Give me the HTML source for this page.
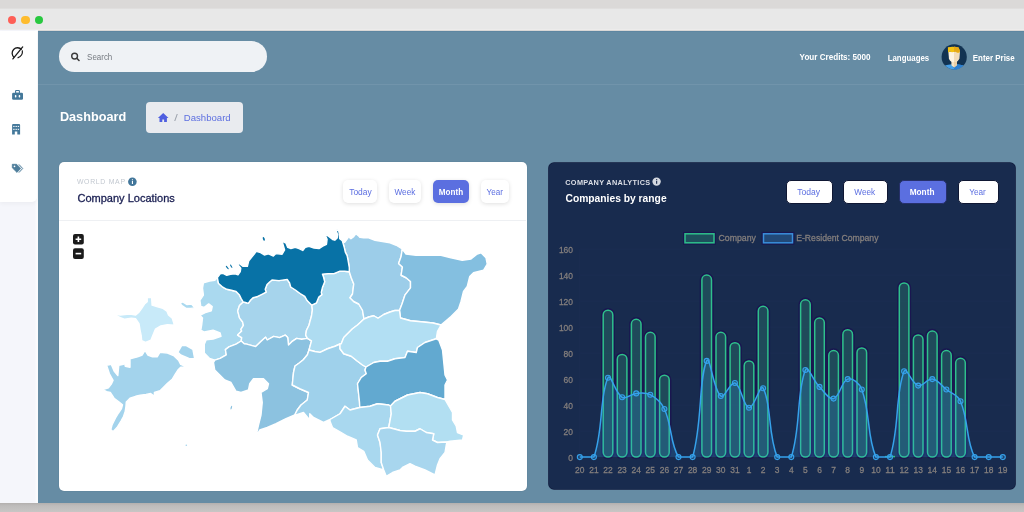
<!DOCTYPE html>
<html><head><meta charset="utf-8">
<style>
*{box-sizing:border-box;margin:0;padding:0}
html,body{width:1024px;height:512px;overflow:hidden;background:#d9d7d6;font-family:"Liberation Sans",sans-serif}
.abs{position:absolute}
#topband{left:0;top:0;width:1024px;height:9px;background:#dbd9d8}
#bar{left:0;top:8.2px;width:1024px;height:22.3px;background:linear-gradient(#dcdad9,#e8e8e8 1.5px,#e8e8e8 20.8px,#f1efee)}
.dot{width:8.6px;height:8.6px;border-radius:50%;top:15.7px}
#side{left:0;top:30.5px;width:37px;height:171px;background:#fff;border-radius:0 0 5px 0;box-shadow:0 2px 4px rgba(0,0,0,.04)}
#sidebg{left:0;top:30px;width:38px;height:472.5px;background:linear-gradient(90deg,#f5f6fb 35px,#fafbfd 36px)}
#main{left:38px;top:30.5px;width:986px;height:472px;background:linear-gradient(#5a83a0,#668ca4 1.5px)}
#bottom{left:0;top:502.5px;width:1024px;height:9.5px;background:linear-gradient(#b3b0ae,#bebcbb 30%,#c8c6c5)}
#hline{left:38px;top:84px;width:986px;height:1px;background:#7194ab}
#search{left:59px;top:41px;width:208px;height:31px;border-radius:16px;background:#eff2f5}
#crumb{left:146px;top:102px;width:97px;height:31px;border-radius:4px;background:#e9ebef}
.card{border-radius:5px}
#c1{left:59px;top:162px;width:468px;height:328.7px;background:#fff;box-shadow:0 0 1px rgba(20,40,60,.35)}
#c2{left:548.5px;top:162.7px;width:466px;height:326.8px;background:#182b4e;box-shadow:0 0 0 0.8px #101a3c}
.btn{position:absolute;border-radius:5px}
#c1 .btn{top:18px;height:23px;background:#fff;box-shadow:0 1px 4px rgba(0,0,0,.13)}
#c1 .btn.on{background:#5b6fe0}
#c2 .btn{top:17px;height:24.5px;background:#fff;border:1px solid #0f1733}
#c2 .btn.on{background:#5b6fe0;border-color:#26306a}
</style></head><body>
<div class="abs" id="topband"></div>
<div class="abs" id="bar"></div>
<div class="abs dot" style="left:7.7px;background:#fe5f57"></div>
<div class="abs dot" style="left:21.2px;background:#febc2e"></div>
<div class="abs dot" style="left:34.7px;background:#28c840"></div>
<div class="abs" id="sidebg"></div>
<div class="abs" id="side"></div>
<div class="abs" id="main"></div>
<div class="abs" id="bottom"></div>
<div class="abs" id="hline"></div>
<div class="abs" id="search"></div>
<div class="abs" id="crumb"></div>
<div class="abs card" id="c1">
  <div class="btn" style="left:284px;width:34.3px"></div>
  <div class="btn" style="left:330px;width:32px"></div>
  <div class="btn on" style="left:374px;width:35.7px"></div>
  <div class="btn" style="left:422px;width:28px"></div>
  <div class="abs" style="left:0;top:58px;width:467px;height:1px;background:#eef0f3"></div>
  <svg class="abs" style="left:0;top:0" width="467" height="328" viewBox="0 0 467 328"><path d="M55.90,152.40 L61.40,153.00 L68.00,152.40 L72.30,152.40 L76.70,153.00 L80.00,150.20 L82.70,146.40 L85.50,142.00 L88.20,139.80 L88.20,135.50 L92.60,135.50 L93.10,143.10 L98.60,144.80 L104.00,146.40 L107.90,149.10 L109.50,153.00 L113.30,156.20 L115.00,161.70 L115.50,163.30 L108.40,162.80 L101.90,163.90 L96.40,167.20 L94.20,172.60 L92.00,178.10 L86.50,180.30 L82.70,178.70 L82.20,173.70 L81.10,168.30 L80.00,161.70 L76.70,156.80 L72.30,156.20 L65.80,157.30 L61.40,155.70 L58.10,154.00Z" fill="#c8eaf9" stroke="#fff" stroke-width="1.4" stroke-linejoin="round"/><path d="M121.00,141.50 L123.70,139.80 L128.10,142.60 L132.50,142.00 L135.80,145.90 L131.40,146.40 L127.00,146.40 L123.70,144.20Z" fill="#aad9ef" stroke="#fff" stroke-width="1.4" stroke-linejoin="round"/><path d="M47.60,203.30 L52.30,202.40 L55.10,209.00 L58.80,213.60 L59.80,203.30 L64.50,202.40 L65.40,199.60 L66.30,204.30 L71.00,205.20 L71.00,196.80 L78.50,194.90 L83.20,193.00 L86.00,188.30 L88.80,193.00 L93.50,194.90 L98.20,194.90 L101.00,190.20 L108.50,191.10 L115.10,193.90 L119.80,198.60 L121.70,202.40 L128.20,205.20 L121.70,205.20 L118.90,208.00 L116.00,212.70 L113.20,217.40 L108.50,221.20 L104.80,224.90 L101.00,228.70 L95.40,230.50 L95.40,234.30 L91.70,231.50 L87.00,232.40 L81.30,233.30 L76.60,234.30 L71.00,236.20 L67.30,239.90 L67.00,244.00 L66.20,249.50 L64.50,254.50 L62.00,259.00 L58.00,265.50 L54.00,269.80 L51.80,267.50 L53.00,263.00 L56.50,256.00 L59.50,251.00 L62.50,246.50 L63.50,242.70 L59.80,239.90 L55.10,236.20 L51.30,230.50 L47.60,229.60 L43.80,227.70 L49.40,225.80 L52.30,222.10 L54.10,218.30 L50.40,211.80Z" fill="#a3d3ec" stroke="#fff" stroke-width="1.4" stroke-linejoin="round"/><path d="M118.90,190.20 L122.60,183.60 L127.30,183.60 L133.90,187.40 L135.70,196.80 L131.00,196.80 L126.40,194.90 L121.70,193.00Z" fill="#a3d3ec" stroke="#fff" stroke-width="1.4" stroke-linejoin="round"/><path d="M158.40,115.50 L159.40,121.20 L163.80,125.20 L167.75,127.30 L172.40,128.25 L177.10,129.50 L180.50,133.10 L182.20,136.60 L184.30,140.00 L180.50,143.60 L178.70,148.90 L180.50,155.90 L183.60,160.00 L184.40,163.30 L181.90,167.40 L182.70,169.00 L178.60,173.10 L182.70,175.60 L182.20,179.00 L177.00,182.10 L169.90,184.90 L166.40,187.60 L167.30,192.80 L161.10,196.40 L155.80,198.10 L150.60,196.40 L145.30,191.10 L145.30,182.30 L147.10,177.90 L154.10,177.00 L162.00,174.40 L161.10,170.90 L154.10,168.20 L145.30,170.00 L141.80,168.20 L142.70,163.00 L143.50,156.00 L140.90,153.30 L146.20,150.70 L152.30,148.90 L153.20,144.50 L149.70,141.90 L145.30,145.40 L141.80,144.50 L140.90,138.40 L144.40,133.10 L143.50,126.10 L144.40,120.80 L150.60,119.00 L155.80,118.20 L158.40,115.50Z" fill="#aad9ef" stroke="#fff" stroke-width="1.4" stroke-linejoin="round"/><path d="M184.30,140.00 L186.50,140.50 L189.30,141.40 L191.20,138.60 L194.00,135.75 L197.75,134.80 L203.40,132.00 L207.10,130.10 L206.20,127.30 L208.00,122.60 L210.90,119.80 L213.00,118.00 L220.00,118.60 L228.20,117.40 L230.60,121.00 L231.70,125.00 L236.40,128.00 L241.10,131.50 L245.80,134.40 L248.10,138.50 L252.80,143.20 L253.40,147.90 L252.50,154.00 L250.80,160.00 L250.00,163.30 L247.50,168.20 L246.70,173.10 L248.40,176.40 L242.60,177.20 L237.70,176.40 L232.80,179.70 L229.50,183.00 L228.70,175.60 L226.20,173.10 L220.50,175.60 L214.70,174.40 L208.20,178.00 L206.50,175.20 L201.60,179.70 L196.70,184.60 L187.70,182.10 L185.20,181.70 L182.20,179.00 L182.70,175.60 L178.60,173.10 L182.70,169.00 L181.90,167.40 L184.40,163.30 L183.60,160.00 L180.50,155.90 L178.70,148.90 L180.50,143.60 L184.30,140.00Z" fill="#a6d4ec" stroke="#fff" stroke-width="1.4" stroke-linejoin="round"/><path d="M155.80,198.10 L161.10,196.40 L167.30,192.80 L166.40,187.60 L169.90,184.90 L177.00,182.10 L182.20,179.00 L185.20,181.70 L187.70,182.10 L196.70,184.60 L201.60,179.70 L206.50,175.20 L208.20,178.00 L214.70,174.40 L220.50,175.60 L226.20,173.10 L228.70,175.60 L229.50,183.00 L232.80,179.70 L237.70,176.40 L242.60,177.20 L248.40,176.40 L252.50,178.90 L250.00,188.00 L248.40,192.80 L244.30,197.70 L240.20,201.00 L236.00,204.00 L234.50,210.50 L233.25,223.00 L240.75,226.75 L249.50,230.50 L248.25,238.00 L242.00,243.00 L238.25,248.00 L235.75,253.00 L227.00,256.75 L217.00,261.75 L208.25,265.50 L200.75,268.00 L197.00,274.25 L199.50,263.00 L202.00,253.00 L203.25,240.50 L202.00,230.50 L208.25,226.75 L209.50,221.75 L204.50,216.75 L194.50,216.75 L190.75,221.75 L189.50,228.00 L182.00,230.50 L177.00,229.25 L172.00,220.50 L165.75,218.00 L160.75,213.00 L155.75,208.00 L154.50,200.50 L155.80,198.10Z" fill="#8cc2e0" stroke="#fff" stroke-width="1.4" stroke-linejoin="round"/><path d="M252.80,143.20 L257.50,140.80 L259.80,135.00 L262.80,132.60 L262.20,130.30 L263.40,125.60 L265.70,119.80 L264.50,115.00 L263.40,112.10 L269.20,111.60 L275.00,111.60 L280.90,109.20 L285.60,109.20 L290.30,109.80 L292.25,115.75 L294.75,122.00 L293.50,132.00 L291.00,135.75 L294.75,139.50 L299.75,142.00 L303.50,148.25 L305.00,157.00 L298.50,163.00 L293.50,166.75 L288.50,171.75 L284.75,175.50 L282.25,181.75 L281.00,182.00 L276.00,184.25 L268.50,186.75 L261.00,190.35 L255.75,189.50 L250.00,188.00 L252.50,178.90 L248.40,176.40 L246.70,173.10 L247.50,168.20 L250.00,163.30 L250.80,160.00 L252.50,154.00 L253.40,147.90 L252.80,143.20Z" fill="#aedcf1" stroke="#fff" stroke-width="1.4" stroke-linejoin="round"/><path d="M250.00,188.00 L255.75,189.50 L261.00,190.35 L268.50,186.75 L276.00,184.25 L281.00,182.00 L281.00,186.75 L284.75,191.75 L292.25,194.25 L298.50,199.25 L303.50,203.00 L307.00,205.00 L306.00,208.00 L307.25,211.75 L302.25,215.50 L298.50,221.75 L299.75,233.00 L300.50,240.00 L300.75,245.50 L291.00,248.00 L286.00,244.25 L281.00,251.75 L271.00,257.50 L264.50,260.50 L254.50,255.50 L250.75,251.75 L250.75,258.00 L244.50,250.50 L237.00,253.00 L235.75,253.00 L238.25,248.00 L242.00,243.00 L248.25,238.00 L249.50,230.50 L240.75,226.75 L233.25,223.00 L234.50,210.50 L236.00,204.00 L240.20,201.00 L244.30,197.70 L248.40,192.80 L250.00,188.00Z" fill="#9fd1eb" stroke="#fff" stroke-width="1.4" stroke-linejoin="round"/><path d="M283.30,78.80 L285.60,80.30 L287.70,77.50 L288.80,76.00 L289.10,72.50 L289.80,75.00 L291.90,76.80 L294.70,74.60 L296.80,71.80 L299.70,74.00 L301.00,75.40 L304.60,75.70 L309.00,75.70 L316.00,78.25 L323.50,79.50 L331.00,80.75 L337.25,83.25 L343.30,87.00 L342.10,94.50 L339.60,101.40 L343.40,105.10 L342.10,113.25 L347.10,115.75 L351.50,119.50 L351.50,125.80 L345.90,133.20 L343.00,142.00 L340.50,148.50 L336.00,148.50 L331.00,150.00 L324.75,152.50 L319.00,156.25 L314.75,153.75 L309.75,155.00 L305.00,157.00 L303.50,148.25 L299.75,142.00 L294.75,139.50 L291.00,135.75 L293.50,132.00 L294.75,122.00 L292.25,115.75 L290.30,109.80 L290.30,105.70 L289.10,98.70 L288.10,93.60 L286.30,90.10 L285.20,85.20 L284.20,81.70 L283.30,78.80Z" fill="#9ccde9" stroke="#fff" stroke-width="1.4" stroke-linejoin="round"/><path d="M343.30,87.00 L347.00,92.00 L357.00,93.25 L369.50,93.25 L382.00,93.25 L392.00,95.75 L403.25,98.25 L412.00,97.00 L418.25,92.00 L422.00,90.75 L427.00,95.75 L428.25,102.00 L424.50,108.25 L414.50,110.75 L410.75,114.50 L408.25,124.50 L404.50,129.50 L402.00,139.50 L399.50,147.00 L392.00,154.50 L382.00,163.00 L374.00,161.00 L362.00,159.75 L351.50,158.75 L341.50,156.00 L340.50,148.50 L343.00,142.00 L345.90,133.20 L351.50,125.80 L351.50,119.50 L347.10,115.75 L342.10,113.25 L343.40,105.10 L339.60,101.40 L342.10,94.50 L343.30,87.00Z" fill="#84bfe0" stroke="#fff" stroke-width="1.4" stroke-linejoin="round"/><path d="M305.00,157.00 L309.75,155.00 L314.75,153.75 L319.00,156.25 L324.75,152.50 L331.00,150.00 L336.00,148.50 L340.50,148.50 L341.50,156.00 L351.50,158.75 L362.00,159.75 L374.00,161.00 L382.00,163.00 L378.50,169.25 L377.25,176.75 L366.00,180.50 L358.50,185.50 L357.25,190.50 L348.50,189.25 L346.00,195.50 L336.00,196.75 L328.50,199.25 L321.00,199.25 L314.75,200.50 L307.00,205.00 L303.50,203.00 L298.50,199.25 L292.25,194.25 L284.75,191.75 L281.00,186.75 L281.00,182.00 L282.25,181.75 L284.75,175.50 L288.50,171.75 L293.50,166.75 L298.50,163.00 L305.00,157.00Z" fill="#b2dff3" stroke="#fff" stroke-width="1.4" stroke-linejoin="round"/><path d="M307.00,205.00 L314.75,200.50 L321.00,199.25 L328.50,199.25 L336.00,196.75 L346.00,195.50 L348.50,189.25 L357.25,190.50 L358.50,185.50 L366.00,180.50 L377.25,176.75 L379.75,178.00 L383.50,188.00 L384.75,200.50 L386.00,213.00 L388.50,218.00 L386.00,223.00 L386.00,237.50 L378.50,235.50 L368.50,231.75 L361.00,230.50 L348.50,233.00 L336.00,239.25 L331.50,244.00 L329.75,243.00 L318.50,241.75 L311.00,244.25 L300.75,245.50 L300.50,240.00 L299.75,233.00 L298.50,221.75 L302.25,215.50 L307.25,211.75 L306.00,208.00 L307.00,205.00Z" fill="#62a9d0" stroke="#fff" stroke-width="1.4" stroke-linejoin="round"/><path d="M300.75,245.50 L311.00,244.25 L318.50,241.75 L329.75,243.00 L331.50,244.00 L332.25,251.75 L329.75,265.50 L321.00,266.75 L318.50,273.00 L321.00,280.50 L322.25,290.50 L322.25,300.50 L324.75,308.00 L316.00,305.50 L308.50,298.00 L304.75,289.25 L298.50,285.50 L297.25,278.00 L288.50,274.25 L282.25,270.50 L273.50,265.50 L271.00,259.25 L271.00,257.50 L281.00,251.75 L286.00,244.25 L291.00,248.00 L300.75,245.50Z" fill="#a9d8ef" stroke="#fff" stroke-width="1.4" stroke-linejoin="round"/><path d="M331.50,244.00 L336.00,239.25 L348.50,233.00 L361.00,230.50 L368.50,231.75 L378.50,235.50 L386.00,237.50 L393.50,250.50 L393.50,258.00 L397.25,264.25 L398.50,270.50 L404.75,273.00 L403.50,278.00 L391.00,279.25 L388.00,280.00 L378.50,280.50 L373.50,278.00 L374.75,271.75 L367.25,270.50 L361.00,266.75 L356.00,269.25 L347.25,269.25 L341.00,268.50 L329.75,265.50 L332.25,251.75 L331.50,244.00Z" fill="#b2dff2" stroke="#fff" stroke-width="1.4" stroke-linejoin="round"/><path d="M329.75,265.50 L341.00,268.50 L347.25,269.25 L356.00,269.25 L361.00,266.75 L367.25,270.50 L374.75,271.75 L373.50,278.00 L378.50,280.50 L388.00,280.00 L387.25,283.00 L386.00,290.50 L381.00,296.75 L378.50,303.00 L376.00,313.00 L366.00,308.00 L356.00,304.25 L351.00,301.75 L343.50,305.50 L341.00,308.00 L333.50,310.50 L327.25,314.25 L324.75,308.00 L322.25,300.50 L322.25,290.50 L321.00,280.50 L318.50,273.00 L321.00,266.75 L329.75,265.50Z" fill="#a8d6ee" stroke="#fff" stroke-width="1.4" stroke-linejoin="round"/><path d="M158.40,115.50 L161.20,111.80 L164.00,111.40 L167.75,113.25 L171.50,112.30 L176.20,111.80 L179.00,112.80 L181.30,109.50 L181.80,106.20 L179.90,103.90 L177.20,99.60 L180.50,101.80 L183.75,104.30 L188.40,104.30 L189.80,98.70 L195.90,91.20 L197.30,89.30 L201.60,90.70 L205.30,93.00 L209.40,91.90 L214.40,94.10 L216.90,91.60 L223.10,92.25 L225.60,87.90 L223.10,79.10 L226.90,81.00 L228.75,85.40 L231.90,86.60 L236.25,85.40 L240.00,86.60 L243.75,88.50 L246.25,85.40 L250.00,84.40 L255.00,86.00 L260.00,86.60 L263.75,84.10 L267.50,82.25 L268.10,77.25 L265.60,71.60 L265.20,69.70 L266.60,72.50 L270.10,74.60 L273.60,77.50 L275.80,78.20 L278.20,76.00 L278.60,72.50 L277.50,69.70 L277.90,67.60 L279.60,68.30 L280.30,71.80 L280.70,76.80 L283.30,78.80 L284.20,81.70 L285.20,85.20 L286.30,90.10 L288.10,93.60 L289.10,98.70 L290.30,105.70 L290.30,109.80 L285.60,109.20 L280.90,109.20 L275.00,111.60 L269.20,111.60 L263.40,112.10 L264.50,115.00 L265.70,119.80 L263.40,125.60 L262.20,130.30 L262.80,132.60 L259.80,135.00 L257.50,140.80 L252.80,143.20 L248.10,138.50 L245.80,134.40 L241.10,131.50 L236.40,128.00 L231.70,125.00 L230.60,121.00 L228.20,117.40 L220.00,118.60 L213.00,118.00 L210.90,119.80 L208.00,122.60 L206.20,127.30 L207.10,130.10 L203.40,132.00 L197.75,134.80 L194.00,135.75 L191.20,138.60 L189.30,141.40 L186.50,140.50 L184.30,140.00 L182.20,136.60 L180.50,133.10 L177.10,129.50 L172.40,128.25 L167.75,127.30 L163.80,125.20 L159.40,121.20 L158.40,115.50Z" fill="#0872a6" stroke="#fff" stroke-width="1.4" stroke-linejoin="round"/><ellipse transform="translate(204.80,76.90) rotate(-20)" rx="0.9" ry="2.0" fill="#0872a6"/><ellipse transform="translate(168.30,105.60) rotate(-40)" rx="0.6" ry="2.2" fill="#0872a6"/><ellipse transform="translate(172.20,104.20) rotate(-30)" rx="0.6" ry="2.0" fill="#0872a6"/><ellipse transform="translate(172.30,245.60) rotate(15)" rx="0.7" ry="1.9" fill="#8cc2e0"/><ellipse transform="translate(127.30,283.20) rotate(0)" rx="0.8" ry="0.7" fill="#a3d3ec"/><rect x="14" y="72" width="10.8" height="10.5" rx="2" fill="#1b1b1b"/><path d="M19.400000000000006,74.5v5.6M16.599999999999994,77.25h5.6" stroke="#fff" stroke-width="1.6"/><rect x="14" y="86.19999999999999" width="10.8" height="10.8" rx="2" fill="#1b1b1b"/><path d="M16.599999999999994,91.6h5.6" stroke="#fff" stroke-width="1.6"/></svg>
</div>
<div class="abs card" id="c2">
  <svg class="abs" style="left:0;top:0;will-change:transform" width="467" height="328" viewBox="0 0 467 328" font-family="Liberation Sans, sans-serif"><line x1="30.8" y1="294.10" x2="461.8" y2="294.10" stroke="#1c2e52" stroke-width="1"/><line x1="30.8" y1="268.10" x2="461.8" y2="268.10" stroke="#1c2e52" stroke-width="1"/><line x1="30.8" y1="242.10" x2="461.8" y2="242.10" stroke="#1c2e52" stroke-width="1"/><line x1="30.8" y1="216.10" x2="461.8" y2="216.10" stroke="#1c2e52" stroke-width="1"/><line x1="30.8" y1="190.10" x2="461.8" y2="190.10" stroke="#1c2e52" stroke-width="1"/><line x1="30.8" y1="164.10" x2="461.8" y2="164.10" stroke="#1c2e52" stroke-width="1"/><line x1="30.8" y1="138.10" x2="461.8" y2="138.10" stroke="#1c2e52" stroke-width="1"/><line x1="30.8" y1="112.10" x2="461.8" y2="112.10" stroke="#1c2e52" stroke-width="1"/><line x1="30.8" y1="86.10" x2="461.8" y2="86.10" stroke="#1c2e52" stroke-width="1"/><line x1="30.8" y1="86.1" x2="30.8" y2="294.1" stroke="#1c2e52" stroke-width="1"/><rect x="52.80" y="145.80" width="12.40" height="149.70" rx="6.20" fill="none" stroke="#1a1650" stroke-width="1.6"/><rect x="54.20" y="147.20" width="9.6" height="146.90" rx="4.8" fill="rgba(60,200,140,0.2)" stroke="#2fc08c" stroke-width="1.5"/><rect x="66.90" y="190.00" width="12.40" height="105.50" rx="6.20" fill="none" stroke="#1a1650" stroke-width="1.6"/><rect x="68.30" y="191.40" width="9.6" height="102.70" rx="4.8" fill="rgba(60,200,140,0.2)" stroke="#2fc08c" stroke-width="1.5"/><rect x="81.00" y="154.90" width="12.40" height="140.60" rx="6.20" fill="none" stroke="#1a1650" stroke-width="1.6"/><rect x="82.40" y="156.30" width="9.6" height="137.80" rx="4.8" fill="rgba(60,200,140,0.2)" stroke="#2fc08c" stroke-width="1.5"/><rect x="95.10" y="167.90" width="12.40" height="127.60" rx="6.20" fill="none" stroke="#1a1650" stroke-width="1.6"/><rect x="96.50" y="169.30" width="9.6" height="124.80" rx="4.8" fill="rgba(60,200,140,0.2)" stroke="#2fc08c" stroke-width="1.5"/><rect x="109.20" y="210.80" width="12.40" height="84.70" rx="6.20" fill="none" stroke="#1a1650" stroke-width="1.6"/><rect x="110.60" y="212.20" width="9.6" height="81.90" rx="4.8" fill="rgba(60,200,140,0.2)" stroke="#2fc08c" stroke-width="1.5"/><rect x="151.50" y="110.70" width="12.40" height="184.80" rx="6.20" fill="none" stroke="#1a1650" stroke-width="1.6"/><rect x="152.90" y="112.10" width="9.6" height="182.00" rx="4.8" fill="rgba(60,200,140,0.2)" stroke="#2fc08c" stroke-width="1.5"/><rect x="165.60" y="167.90" width="12.40" height="127.60" rx="6.20" fill="none" stroke="#1a1650" stroke-width="1.6"/><rect x="167.00" y="169.30" width="9.6" height="124.80" rx="4.8" fill="rgba(60,200,140,0.2)" stroke="#2fc08c" stroke-width="1.5"/><rect x="179.70" y="178.30" width="12.40" height="117.20" rx="6.20" fill="none" stroke="#1a1650" stroke-width="1.6"/><rect x="181.10" y="179.70" width="9.6" height="114.40" rx="4.8" fill="rgba(60,200,140,0.2)" stroke="#2fc08c" stroke-width="1.5"/><rect x="193.80" y="196.50" width="12.40" height="99.00" rx="6.20" fill="none" stroke="#1a1650" stroke-width="1.6"/><rect x="195.20" y="197.90" width="9.6" height="96.20" rx="4.8" fill="rgba(60,200,140,0.2)" stroke="#2fc08c" stroke-width="1.5"/><rect x="207.90" y="141.90" width="12.40" height="153.60" rx="6.20" fill="none" stroke="#1a1650" stroke-width="1.6"/><rect x="209.30" y="143.30" width="9.6" height="150.80" rx="4.8" fill="rgba(60,200,140,0.2)" stroke="#2fc08c" stroke-width="1.5"/><rect x="250.20" y="135.40" width="12.40" height="160.10" rx="6.20" fill="none" stroke="#1a1650" stroke-width="1.6"/><rect x="251.60" y="136.80" width="9.6" height="157.30" rx="4.8" fill="rgba(60,200,140,0.2)" stroke="#2fc08c" stroke-width="1.5"/><rect x="264.30" y="153.60" width="12.40" height="141.90" rx="6.20" fill="none" stroke="#1a1650" stroke-width="1.6"/><rect x="265.70" y="155.00" width="9.6" height="139.10" rx="4.8" fill="rgba(60,200,140,0.2)" stroke="#2fc08c" stroke-width="1.5"/><rect x="278.40" y="186.10" width="12.40" height="109.40" rx="6.20" fill="none" stroke="#1a1650" stroke-width="1.6"/><rect x="279.80" y="187.50" width="9.6" height="106.60" rx="4.8" fill="rgba(60,200,140,0.2)" stroke="#2fc08c" stroke-width="1.5"/><rect x="292.50" y="165.30" width="12.40" height="130.20" rx="6.20" fill="none" stroke="#1a1650" stroke-width="1.6"/><rect x="293.90" y="166.70" width="9.6" height="127.40" rx="4.8" fill="rgba(60,200,140,0.2)" stroke="#2fc08c" stroke-width="1.5"/><rect x="306.60" y="183.50" width="12.40" height="112.00" rx="6.20" fill="none" stroke="#1a1650" stroke-width="1.6"/><rect x="308.00" y="184.90" width="9.6" height="109.20" rx="4.8" fill="rgba(60,200,140,0.2)" stroke="#2fc08c" stroke-width="1.5"/><rect x="348.90" y="118.50" width="12.40" height="177.00" rx="6.20" fill="none" stroke="#1a1650" stroke-width="1.6"/><rect x="350.30" y="119.90" width="9.6" height="174.20" rx="4.8" fill="rgba(60,200,140,0.2)" stroke="#2fc08c" stroke-width="1.5"/><rect x="363.00" y="170.50" width="12.40" height="125.00" rx="6.20" fill="none" stroke="#1a1650" stroke-width="1.6"/><rect x="364.40" y="171.90" width="9.6" height="122.20" rx="4.8" fill="rgba(60,200,140,0.2)" stroke="#2fc08c" stroke-width="1.5"/><rect x="377.10" y="166.60" width="12.40" height="128.90" rx="6.20" fill="none" stroke="#1a1650" stroke-width="1.6"/><rect x="378.50" y="168.00" width="9.6" height="126.10" rx="4.8" fill="rgba(60,200,140,0.2)" stroke="#2fc08c" stroke-width="1.5"/><rect x="391.20" y="186.10" width="12.40" height="109.40" rx="6.20" fill="none" stroke="#1a1650" stroke-width="1.6"/><rect x="392.60" y="187.50" width="9.6" height="106.60" rx="4.8" fill="rgba(60,200,140,0.2)" stroke="#2fc08c" stroke-width="1.5"/><rect x="405.30" y="193.90" width="12.40" height="101.60" rx="6.20" fill="none" stroke="#1a1650" stroke-width="1.6"/><rect x="406.70" y="195.30" width="9.6" height="98.80" rx="4.8" fill="rgba(60,200,140,0.2)" stroke="#2fc08c" stroke-width="1.5"/><path d="M30.80,294.10 C36.44,294.10 43.22,294.10 44.90,294.10 C54.50,267.11 50.31,233.22 59.00,214.80 C61.59,209.30 66.08,230.42 73.10,234.30 C77.36,236.66 81.47,230.93 87.20,230.40 C92.75,229.89 96.64,229.12 101.30,231.70 C107.92,235.36 112.17,238.86 115.40,246.00 C123.45,263.82 120.70,279.08 129.50,294.10 C131.98,294.10 142.17,294.10 143.60,294.10 C153.45,260.49 149.58,215.49 157.70,197.90 C160.86,191.05 164.31,227.13 171.80,233.00 C175.59,235.97 181.36,218.12 185.90,220.00 C192.64,222.80 193.89,243.57 200.00,244.70 C205.17,245.65 211.22,220.16 214.10,225.20 C222.50,239.92 218.80,271.14 228.20,294.10 C230.08,294.10 240.75,294.10 242.30,294.10 C252.03,264.06 247.37,229.47 256.40,207.00 C258.65,201.39 264.34,217.66 270.50,223.90 C275.62,229.10 279.72,236.95 284.60,235.60 C291.00,233.83 292.17,218.21 298.70,216.10 C303.45,214.57 310.52,220.19 312.80,226.50 C321.80,251.39 317.53,271.64 326.90,294.10 C328.81,294.10 339.43,294.10 341.00,294.10 C350.71,264.57 345.94,231.53 355.10,208.30 C357.22,202.93 362.84,220.84 369.20,222.60 C374.12,223.96 378.00,215.37 383.30,216.10 C389.28,216.93 391.89,222.18 397.40,226.50 C403.17,231.02 408.78,231.68 411.50,238.20 C420.06,258.72 416.54,276.13 425.60,294.10 C427.82,294.10 434.06,294.10 439.70,294.10 C445.34,294.10 448.16,294.10 453.80,294.10 L453.80,294.10 L30.80,294.10 Z" fill="rgba(54,162,235,0.2)"/><line x1="336.00" y1="293.60" x2="346.00" y2="293.60" stroke="#2fc08c" stroke-width="1.5"/><path d="M30.80,294.10 C36.44,294.10 43.22,294.10 44.90,294.10 C54.50,267.11 50.31,233.22 59.00,214.80 C61.59,209.30 66.08,230.42 73.10,234.30 C77.36,236.66 81.47,230.93 87.20,230.40 C92.75,229.89 96.64,229.12 101.30,231.70 C107.92,235.36 112.17,238.86 115.40,246.00 C123.45,263.82 120.70,279.08 129.50,294.10 C131.98,294.10 142.17,294.10 143.60,294.10 C153.45,260.49 149.58,215.49 157.70,197.90 C160.86,191.05 164.31,227.13 171.80,233.00 C175.59,235.97 181.36,218.12 185.90,220.00 C192.64,222.80 193.89,243.57 200.00,244.70 C205.17,245.65 211.22,220.16 214.10,225.20 C222.50,239.92 218.80,271.14 228.20,294.10 C230.08,294.10 240.75,294.10 242.30,294.10 C252.03,264.06 247.37,229.47 256.40,207.00 C258.65,201.39 264.34,217.66 270.50,223.90 C275.62,229.10 279.72,236.95 284.60,235.60 C291.00,233.83 292.17,218.21 298.70,216.10 C303.45,214.57 310.52,220.19 312.80,226.50 C321.80,251.39 317.53,271.64 326.90,294.10 C328.81,294.10 339.43,294.10 341.00,294.10 C350.71,264.57 345.94,231.53 355.10,208.30 C357.22,202.93 362.84,220.84 369.20,222.60 C374.12,223.96 378.00,215.37 383.30,216.10 C389.28,216.93 391.89,222.18 397.40,226.50 C403.17,231.02 408.78,231.68 411.50,238.20 C420.06,258.72 416.54,276.13 425.60,294.10 C427.82,294.10 434.06,294.10 439.70,294.10 C445.34,294.10 448.16,294.10 453.80,294.10" fill="none" stroke="#36a2eb" stroke-width="1.5"/><circle cx="30.80" cy="294.10" r="2.5" fill="rgba(54,162,235,0.2)" stroke="#36a2eb" stroke-width="1.1"/><circle cx="44.90" cy="294.10" r="2.5" fill="rgba(54,162,235,0.2)" stroke="#36a2eb" stroke-width="1.1"/><circle cx="59.00" cy="214.80" r="2.5" fill="rgba(54,162,235,0.2)" stroke="#36a2eb" stroke-width="1.1"/><circle cx="73.10" cy="234.30" r="2.5" fill="rgba(54,162,235,0.2)" stroke="#36a2eb" stroke-width="1.1"/><circle cx="87.20" cy="230.40" r="2.5" fill="rgba(54,162,235,0.2)" stroke="#36a2eb" stroke-width="1.1"/><circle cx="101.30" cy="231.70" r="2.5" fill="rgba(54,162,235,0.2)" stroke="#36a2eb" stroke-width="1.1"/><circle cx="115.40" cy="246.00" r="2.5" fill="rgba(54,162,235,0.2)" stroke="#36a2eb" stroke-width="1.1"/><circle cx="129.50" cy="294.10" r="2.5" fill="rgba(54,162,235,0.2)" stroke="#36a2eb" stroke-width="1.1"/><circle cx="143.60" cy="294.10" r="2.5" fill="rgba(54,162,235,0.2)" stroke="#36a2eb" stroke-width="1.1"/><circle cx="157.70" cy="197.90" r="2.5" fill="rgba(54,162,235,0.2)" stroke="#36a2eb" stroke-width="1.1"/><circle cx="171.80" cy="233.00" r="2.5" fill="rgba(54,162,235,0.2)" stroke="#36a2eb" stroke-width="1.1"/><circle cx="185.90" cy="220.00" r="2.5" fill="rgba(54,162,235,0.2)" stroke="#36a2eb" stroke-width="1.1"/><circle cx="200.00" cy="244.70" r="2.5" fill="rgba(54,162,235,0.2)" stroke="#36a2eb" stroke-width="1.1"/><circle cx="214.10" cy="225.20" r="2.5" fill="rgba(54,162,235,0.2)" stroke="#36a2eb" stroke-width="1.1"/><circle cx="228.20" cy="294.10" r="2.5" fill="rgba(54,162,235,0.2)" stroke="#36a2eb" stroke-width="1.1"/><circle cx="242.30" cy="294.10" r="2.5" fill="rgba(54,162,235,0.2)" stroke="#36a2eb" stroke-width="1.1"/><circle cx="256.40" cy="207.00" r="2.5" fill="rgba(54,162,235,0.2)" stroke="#36a2eb" stroke-width="1.1"/><circle cx="270.50" cy="223.90" r="2.5" fill="rgba(54,162,235,0.2)" stroke="#36a2eb" stroke-width="1.1"/><circle cx="284.60" cy="235.60" r="2.5" fill="rgba(54,162,235,0.2)" stroke="#36a2eb" stroke-width="1.1"/><circle cx="298.70" cy="216.10" r="2.5" fill="rgba(54,162,235,0.2)" stroke="#36a2eb" stroke-width="1.1"/><circle cx="312.80" cy="226.50" r="2.5" fill="rgba(54,162,235,0.2)" stroke="#36a2eb" stroke-width="1.1"/><circle cx="326.90" cy="294.10" r="2.5" fill="rgba(54,162,235,0.2)" stroke="#36a2eb" stroke-width="1.1"/><circle cx="341.00" cy="294.10" r="2.5" fill="rgba(54,162,235,0.2)" stroke="#36a2eb" stroke-width="1.1"/><circle cx="355.10" cy="208.30" r="2.5" fill="rgba(54,162,235,0.2)" stroke="#36a2eb" stroke-width="1.1"/><circle cx="369.20" cy="222.60" r="2.5" fill="rgba(54,162,235,0.2)" stroke="#36a2eb" stroke-width="1.1"/><circle cx="383.30" cy="216.10" r="2.5" fill="rgba(54,162,235,0.2)" stroke="#36a2eb" stroke-width="1.1"/><circle cx="397.40" cy="226.50" r="2.5" fill="rgba(54,162,235,0.2)" stroke="#36a2eb" stroke-width="1.1"/><circle cx="411.50" cy="238.20" r="2.5" fill="rgba(54,162,235,0.2)" stroke="#36a2eb" stroke-width="1.1"/><circle cx="425.60" cy="294.10" r="2.5" fill="rgba(54,162,235,0.2)" stroke="#36a2eb" stroke-width="1.1"/><circle cx="439.70" cy="294.10" r="2.5" fill="rgba(54,162,235,0.2)" stroke="#36a2eb" stroke-width="1.1"/><circle cx="453.80" cy="294.10" r="2.5" fill="rgba(54,162,235,0.2)" stroke="#36a2eb" stroke-width="1.1"/><text x="24.0" y="297.50" text-anchor="end" font-size="9.6" fill="#847f7d" stroke="#847f7d" stroke-width="0.3" textLength="4.7" lengthAdjust="spacingAndGlyphs">0</text><text x="24.0" y="271.50" text-anchor="end" font-size="9.6" fill="#847f7d" stroke="#847f7d" stroke-width="0.3" textLength="9.4" lengthAdjust="spacingAndGlyphs">20</text><text x="24.0" y="245.50" text-anchor="end" font-size="9.6" fill="#847f7d" stroke="#847f7d" stroke-width="0.3" textLength="9.4" lengthAdjust="spacingAndGlyphs">40</text><text x="24.0" y="219.50" text-anchor="end" font-size="9.6" fill="#847f7d" stroke="#847f7d" stroke-width="0.3" textLength="9.4" lengthAdjust="spacingAndGlyphs">60</text><text x="24.0" y="193.50" text-anchor="end" font-size="9.6" fill="#847f7d" stroke="#847f7d" stroke-width="0.3" textLength="9.4" lengthAdjust="spacingAndGlyphs">80</text><text x="24.0" y="167.50" text-anchor="end" font-size="9.6" fill="#847f7d" stroke="#847f7d" stroke-width="0.3" textLength="14.1" lengthAdjust="spacingAndGlyphs">100</text><text x="24.0" y="141.50" text-anchor="end" font-size="9.6" fill="#847f7d" stroke="#847f7d" stroke-width="0.3" textLength="14.1" lengthAdjust="spacingAndGlyphs">120</text><text x="24.0" y="115.50" text-anchor="end" font-size="9.6" fill="#847f7d" stroke="#847f7d" stroke-width="0.3" textLength="14.1" lengthAdjust="spacingAndGlyphs">140</text><text x="24.0" y="89.50" text-anchor="end" font-size="9.6" fill="#847f7d" stroke="#847f7d" stroke-width="0.3" textLength="14.1" lengthAdjust="spacingAndGlyphs">160</text><text x="30.80" y="309.70" text-anchor="middle" font-size="9.6" fill="#847f7d" stroke="#847f7d" stroke-width="0.3" textLength="9.4" lengthAdjust="spacingAndGlyphs">20</text><text x="44.90" y="309.70" text-anchor="middle" font-size="9.6" fill="#847f7d" stroke="#847f7d" stroke-width="0.3" textLength="9.4" lengthAdjust="spacingAndGlyphs">21</text><text x="59.00" y="309.70" text-anchor="middle" font-size="9.6" fill="#847f7d" stroke="#847f7d" stroke-width="0.3" textLength="9.4" lengthAdjust="spacingAndGlyphs">22</text><text x="73.10" y="309.70" text-anchor="middle" font-size="9.6" fill="#847f7d" stroke="#847f7d" stroke-width="0.3" textLength="9.4" lengthAdjust="spacingAndGlyphs">23</text><text x="87.20" y="309.70" text-anchor="middle" font-size="9.6" fill="#847f7d" stroke="#847f7d" stroke-width="0.3" textLength="9.4" lengthAdjust="spacingAndGlyphs">24</text><text x="101.30" y="309.70" text-anchor="middle" font-size="9.6" fill="#847f7d" stroke="#847f7d" stroke-width="0.3" textLength="9.4" lengthAdjust="spacingAndGlyphs">25</text><text x="115.40" y="309.70" text-anchor="middle" font-size="9.6" fill="#847f7d" stroke="#847f7d" stroke-width="0.3" textLength="9.4" lengthAdjust="spacingAndGlyphs">26</text><text x="129.50" y="309.70" text-anchor="middle" font-size="9.6" fill="#847f7d" stroke="#847f7d" stroke-width="0.3" textLength="9.4" lengthAdjust="spacingAndGlyphs">27</text><text x="143.60" y="309.70" text-anchor="middle" font-size="9.6" fill="#847f7d" stroke="#847f7d" stroke-width="0.3" textLength="9.4" lengthAdjust="spacingAndGlyphs">28</text><text x="157.70" y="309.70" text-anchor="middle" font-size="9.6" fill="#847f7d" stroke="#847f7d" stroke-width="0.3" textLength="9.4" lengthAdjust="spacingAndGlyphs">29</text><text x="171.80" y="309.70" text-anchor="middle" font-size="9.6" fill="#847f7d" stroke="#847f7d" stroke-width="0.3" textLength="9.4" lengthAdjust="spacingAndGlyphs">30</text><text x="185.90" y="309.70" text-anchor="middle" font-size="9.6" fill="#847f7d" stroke="#847f7d" stroke-width="0.3" textLength="9.4" lengthAdjust="spacingAndGlyphs">31</text><text x="200.00" y="309.70" text-anchor="middle" font-size="9.6" fill="#847f7d" stroke="#847f7d" stroke-width="0.3" textLength="4.7" lengthAdjust="spacingAndGlyphs">1</text><text x="214.10" y="309.70" text-anchor="middle" font-size="9.6" fill="#847f7d" stroke="#847f7d" stroke-width="0.3" textLength="4.7" lengthAdjust="spacingAndGlyphs">2</text><text x="228.20" y="309.70" text-anchor="middle" font-size="9.6" fill="#847f7d" stroke="#847f7d" stroke-width="0.3" textLength="4.7" lengthAdjust="spacingAndGlyphs">3</text><text x="242.30" y="309.70" text-anchor="middle" font-size="9.6" fill="#847f7d" stroke="#847f7d" stroke-width="0.3" textLength="4.7" lengthAdjust="spacingAndGlyphs">4</text><text x="256.40" y="309.70" text-anchor="middle" font-size="9.6" fill="#847f7d" stroke="#847f7d" stroke-width="0.3" textLength="4.7" lengthAdjust="spacingAndGlyphs">5</text><text x="270.50" y="309.70" text-anchor="middle" font-size="9.6" fill="#847f7d" stroke="#847f7d" stroke-width="0.3" textLength="4.7" lengthAdjust="spacingAndGlyphs">6</text><text x="284.60" y="309.70" text-anchor="middle" font-size="9.6" fill="#847f7d" stroke="#847f7d" stroke-width="0.3" textLength="4.7" lengthAdjust="spacingAndGlyphs">7</text><text x="298.70" y="309.70" text-anchor="middle" font-size="9.6" fill="#847f7d" stroke="#847f7d" stroke-width="0.3" textLength="4.7" lengthAdjust="spacingAndGlyphs">8</text><text x="312.80" y="309.70" text-anchor="middle" font-size="9.6" fill="#847f7d" stroke="#847f7d" stroke-width="0.3" textLength="4.7" lengthAdjust="spacingAndGlyphs">9</text><text x="326.90" y="309.70" text-anchor="middle" font-size="9.6" fill="#847f7d" stroke="#847f7d" stroke-width="0.3" textLength="9.4" lengthAdjust="spacingAndGlyphs">10</text><text x="341.00" y="309.70" text-anchor="middle" font-size="9.6" fill="#847f7d" stroke="#847f7d" stroke-width="0.3" textLength="9.4" lengthAdjust="spacingAndGlyphs">11</text><text x="355.10" y="309.70" text-anchor="middle" font-size="9.6" fill="#847f7d" stroke="#847f7d" stroke-width="0.3" textLength="9.4" lengthAdjust="spacingAndGlyphs">12</text><text x="369.20" y="309.70" text-anchor="middle" font-size="9.6" fill="#847f7d" stroke="#847f7d" stroke-width="0.3" textLength="9.4" lengthAdjust="spacingAndGlyphs">13</text><text x="383.30" y="309.70" text-anchor="middle" font-size="9.6" fill="#847f7d" stroke="#847f7d" stroke-width="0.3" textLength="9.4" lengthAdjust="spacingAndGlyphs">14</text><text x="397.40" y="309.70" text-anchor="middle" font-size="9.6" fill="#847f7d" stroke="#847f7d" stroke-width="0.3" textLength="9.4" lengthAdjust="spacingAndGlyphs">15</text><text x="411.50" y="309.70" text-anchor="middle" font-size="9.6" fill="#847f7d" stroke="#847f7d" stroke-width="0.3" textLength="9.4" lengthAdjust="spacingAndGlyphs">16</text><text x="425.60" y="309.70" text-anchor="middle" font-size="9.6" fill="#847f7d" stroke="#847f7d" stroke-width="0.3" textLength="9.4" lengthAdjust="spacingAndGlyphs">17</text><text x="439.70" y="309.70" text-anchor="middle" font-size="9.6" fill="#847f7d" stroke="#847f7d" stroke-width="0.3" textLength="9.4" lengthAdjust="spacingAndGlyphs">18</text><text x="453.80" y="309.70" text-anchor="middle" font-size="9.6" fill="#847f7d" stroke="#847f7d" stroke-width="0.3" textLength="9.4" lengthAdjust="spacingAndGlyphs">19</text><rect x="134.7" y="69.50000000000001" width="31.6" height="11.6" fill="none" stroke="#1a1650" stroke-width="1.2"/><rect x="213.2" y="69.50000000000001" width="31.6" height="11.6" fill="none" stroke="#1a1650" stroke-width="1.2"/><rect x="136.0" y="70.80000000000001" width="29" height="9" fill="rgba(46,192,140,0.25)" stroke="#2fc08c" stroke-width="1.5"/><text x="169.5" y="78.30000000000001" font-size="9.6" fill="#847f7d" stroke="#847f7d" stroke-width="0.3" textLength="37.4" lengthAdjust="spacingAndGlyphs">Company</text><rect x="214.5" y="70.80000000000001" width="29" height="9" fill="rgba(58,143,220,0.3)" stroke="#3a8fdc" stroke-width="1.5"/><text x="247.20000000000005" y="78.30000000000001" font-size="9.6" fill="#847f7d" stroke="#847f7d" stroke-width="0.3" textLength="82.3" lengthAdjust="spacingAndGlyphs">E-Resident Company</text></svg>
  <div class="btn" style="left:237px;width:47px"></div>
  <div class="btn" style="left:294.5px;width:44.5px"></div>
  <div class="btn on" style="left:350px;width:48.4px"></div>
  <div class="btn" style="left:409px;width:41.2px"></div>
</div>
<svg class="abs" style="left:0;top:0;z-index:10;will-change:transform" width="1024" height="512" viewBox="0 0 1024 512" font-family="Liberation Sans, sans-serif"><text x="87.10" y="60.10" font-size="8.6" font-weight="normal" fill="#757a80" textLength="25.20" lengthAdjust="spacingAndGlyphs">Search</text><text x="799.60" y="60.20" font-size="9.2" font-weight="bold" fill="#ffffff" textLength="71.00" lengthAdjust="spacingAndGlyphs">Your Credits: 5000</text><text x="887.70" y="60.60" font-size="9.2" font-weight="bold" fill="#ffffff" textLength="41.50" lengthAdjust="spacingAndGlyphs">Languages</text><text x="972.80" y="60.50" font-size="9.2" font-weight="bold" fill="#ffffff" textLength="41.90" lengthAdjust="spacingAndGlyphs">Enter Prise</text><text x="59.90" y="121.00" font-size="13.2" font-weight="bold" fill="#ffffff" textLength="66.30" lengthAdjust="spacingAndGlyphs">Dashboard</text><text x="183.80" y="121.00" font-size="9.5" font-weight="normal" fill="#5d6fe0" textLength="46.90" lengthAdjust="spacingAndGlyphs">Dashboard</text><text x="174.20" y="121.30" font-size="9.5" font-weight="normal" fill="#9aa0aa" textLength="3.50" lengthAdjust="spacingAndGlyphs">/</text><text x="76.90" y="184.25" font-size="6.9" font-weight="normal" fill="#c2c8d0" textLength="48.10" lengthAdjust="spacing">WORLD MAP</text><text x="77.50" y="201.70" font-size="10.7" font-weight="normal" fill="#1a1f52" stroke="#1a1f52" stroke-width="0.3" textLength="97.30" lengthAdjust="spacingAndGlyphs">Company Locations</text><text x="565.25" y="184.60" font-size="7.3" font-weight="bold" fill="#dcdfe6" textLength="84.95" lengthAdjust="spacing">COMPANY ANALYTICS</text><text x="565.50" y="201.75" font-size="10.5" font-weight="bold" fill="#ffffff" textLength="101.10" lengthAdjust="spacingAndGlyphs">Companies by range</text><text x="349.20" y="194.80" font-size="8.7" font-weight="normal" fill="#5b6ee1" textLength="22.50" lengthAdjust="spacingAndGlyphs">Today</text><text x="394.50" y="194.80" font-size="8.7" font-weight="normal" fill="#5b6ee1" textLength="20.90" lengthAdjust="spacingAndGlyphs">Week</text><text x="438.80" y="194.80" font-size="8.7" font-weight="bold" fill="#ffffff" textLength="24.30" lengthAdjust="spacingAndGlyphs">Month</text><text x="486.60" y="194.80" font-size="8.7" font-weight="normal" fill="#5b6ee1" textLength="16.40" lengthAdjust="spacingAndGlyphs">Year</text><text x="797.30" y="195.00" font-size="8.7" font-weight="normal" fill="#5b6ee1" textLength="22.80" lengthAdjust="spacingAndGlyphs">Today</text><text x="854.30" y="195.00" font-size="8.7" font-weight="normal" fill="#5b6ee1" textLength="20.90" lengthAdjust="spacingAndGlyphs">Week</text><text x="909.70" y="195.00" font-size="8.7" font-weight="bold" fill="#ffffff" textLength="24.80" lengthAdjust="spacingAndGlyphs">Month</text><text x="969.20" y="195.00" font-size="8.7" font-weight="normal" fill="#5b6ee1" textLength="16.60" lengthAdjust="spacingAndGlyphs">Year</text><circle cx="74.6" cy="56.1" r="2.9" fill="none" stroke="#3b3b3b" stroke-width="1.4"/><path d="M76.8 58.3L79 60.5" stroke="#3b3b3b" stroke-width="1.6" stroke-linecap="round"/><path d="M163.2 113L157.9 117.9h1.6v4.2h2.8v-2.6h1.8v2.6h2.8v-4.2h1.6z" fill="#4f5fe0"/><circle cx="132.4" cy="181.8" r="4.3" fill="#42769a"/><rect x="131.9" y="181" width="1.1" height="3" fill="#fff"/><rect x="131.9" y="179.3" width="1.1" height="1" fill="#fff"/><circle cx="656.6" cy="181.6" r="4.2" fill="#d5d9e0"/><rect x="656.1" y="180.8" width="1.1" height="3" fill="#1b2b4e"/><rect x="656.1" y="179.1" width="1.1" height="1" fill="#1b2b4e"/><clipPath id="av"><circle cx="954.2" cy="56.9" r="12.6"/></clipPath><circle cx="954.2" cy="56.9" r="12.6" fill="#123352"/><g clip-path="url(#av)"><path d="M942 66.5 Q947 64.6 951.5 64.2 L954 67.8 L956.8 64.2 Q961.5 64.6 966.5 66.5 L967 72 L941 72Z" fill="#47a0e8"/><path d="M954 67.8 L956.8 64.2 Q961.5 64.6 966.5 66.5 L967 72 L954 72Z" fill="#2d7fd0"/><path d="M951.4 60 H956.9 V65.2 L954 67.6 L951.4 65.2Z" fill="#f7e4c6"/><path d="M954 60 H956.9 V65.2 L954 67.6Z" fill="#ecd0a6"/><path d="M948.4 51.5 H959.7 L959.2 58.5 Q958 61.8 955.5 62 H952.6 Q950 61.8 948.9 58.5Z" fill="#fdf3e1"/><path d="M954 51.5 H959.7 L959.2 58.5 Q958 61.8 955.5 62 H954Z" fill="#f2dcba"/><path d="M948 52.5 L947.9 47.3 Q953 46.2 958.6 47.6 L959.8 50.6 L959.3 52.5 H957 L955.5 51.6 L952 52.3 L950 51.6Z" fill="#f4c212"/><path d="M954 46.6 Q956.5 46.9 958.6 47.6 L959.8 50.6 L959.3 52.5 H957 L955.5 51.6 L954 51.9Z" fill="#e5a817"/></g><path d="M14.2 57.4 A5.4 5.4 0 1 1 21.6 49.6" fill="none" stroke="#1a1a1a" stroke-width="1.3"/><path d="M12.9 58.9 L22.7 46.9" stroke="#1a1a1a" stroke-width="1.3" stroke-linecap="round"/><path d="M22.3 50.3 Q23.2 55.6 17.6 57.9" fill="none" stroke="#1a1a1a" stroke-width="1.2"/><g><rect x="15.6" y="90.5" width="3.8" height="2.8" rx="0.6" fill="none" stroke="#44789a" stroke-width="1.1"/><rect x="12.1" y="92.7" width="10.9" height="7" rx="1.3" fill="#44789a"/><rect x="14.9" y="95.1" width="1.5" height="2.3" rx="0.6" fill="#fff"/><rect x="18.7" y="95.1" width="1.5" height="2.3" rx="0.6" fill="#fff"/></g><g><path d="M12.1 125 Q12.1 123.9 13.2 123.9 H19 Q20.1 123.9 20.1 125 V134.4 H17.3 V131.5 H14.8 V134.4 H12.1Z" fill="#44789a"/><g fill="#fff" opacity="0.92"><rect x="13.2" y="125.9" width="1.4" height="1.1"/><rect x="15.5" y="125.9" width="1.4" height="1.1"/><rect x="17.7" y="125.9" width="1.4" height="1.1"/><rect x="13.2" y="128.8" width="1.4" height="1.1"/><rect x="15.5" y="128.8" width="1.4" height="1.1"/><rect x="17.7" y="128.8" width="1.4" height="1.1"/></g></g><path d="M12.3 164.3 L16.6 164.3 L20.7 168.4 L17 172.4 L12.3 167.8Z" fill="#4e7d9b" stroke="#4e7d9b" stroke-width="0.8" stroke-linejoin="round"/><circle cx="14.5" cy="166.3" r="0.85" fill="#fff"/><path d="M18.9 164.4 L22.7 168.5 L18.9 172.6" fill="none" stroke="#4e7d9b" stroke-width="1" stroke-linejoin="round"/></svg>
</body></html>
